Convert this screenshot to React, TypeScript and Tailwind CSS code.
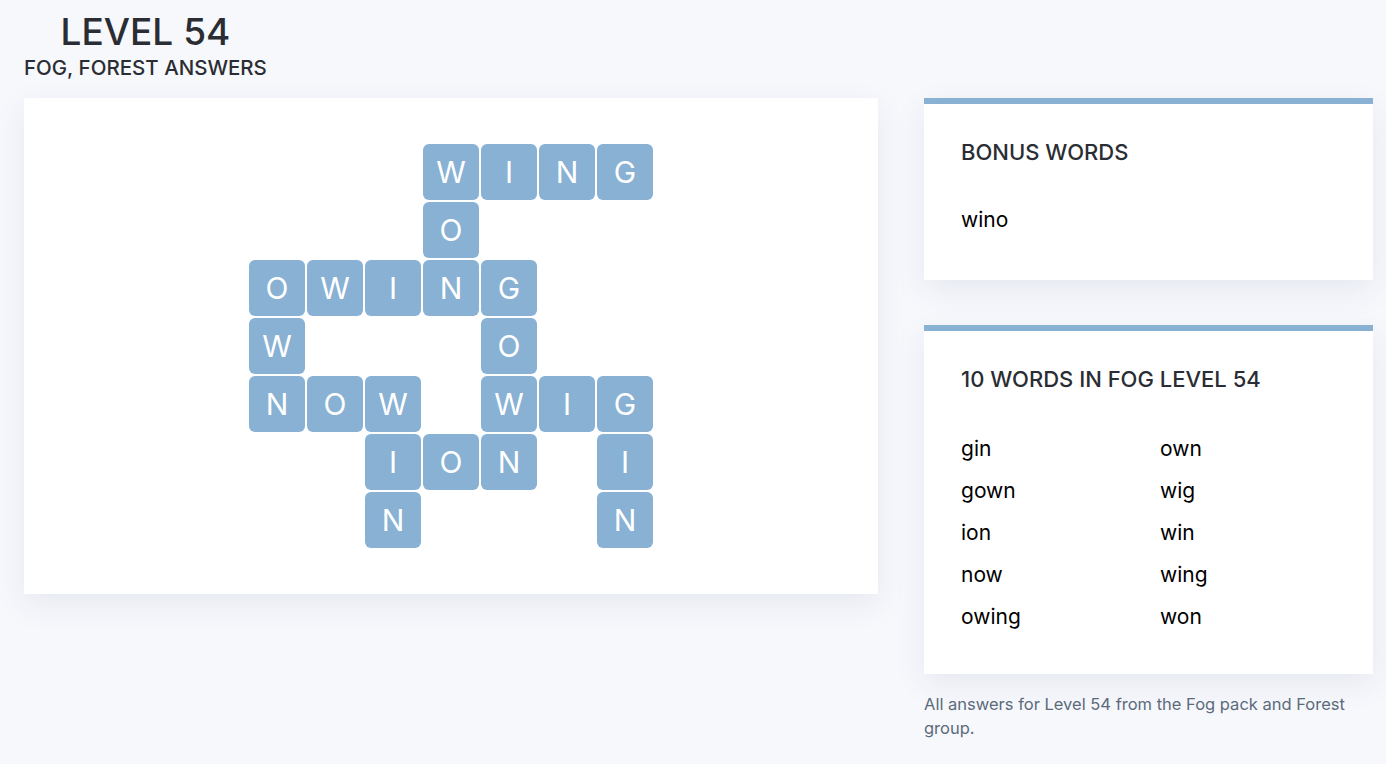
import React from 'react';

const grid: string[] = [
  '   WING',
  '   O   ',
  'OWING  ',
  'W   O  ',
  'NOW WIG',
  '  ION I',
  '  N   N',
];

const words: string[][] = [
  ['gin', 'own'],
  ['gown', 'wig'],
  ['ion', 'win'],
  ['now', 'wing'],
  ['owing', 'won'],
];

function Board() {
  return (
    <div className="grid grid-cols-[repeat(7,56px)] grid-rows-[repeat(7,56px)] gap-[2px]">
      {grid.flatMap((row, r) =>
        row.split('').map((ch, c) =>
          ch === ' ' ? (
            <div key={`${r}-${c}`} />
          ) : (
            <div
              key={`${r}-${c}`}
              className="flex items-center justify-center rounded-[6px] bg-[#88b1d4] text-[30px] text-white"
            >
              {ch}
            </div>
          )
        )
      )}
    </div>
  );
}

function Panel({ children, pb }: { children: React.ReactNode; pb: string }) {
  return (
    <div className={`border-t-[6px] border-[#88b1d4] bg-white px-[37px] pt-[34px] shadow-[0_10px_30px_rgba(30,50,100,0.08)] ${pb}`}>
      {children}
    </div>
  );
}

export default function App() {
  return (
    <div className="min-h-[764px] bg-[#f7f8fc] font-['Inter',sans-serif] text-[#2a2d33]">
      <div className="pl-[24px] pt-[8px]">
        <div className="inline-block text-center">
          <h1 className="text-[37px] leading-[48px] font-medium">LEVEL 54</h1>
          <h2 className="text-[20.5px] leading-[24px] font-medium">FOG, FOREST ANSWERS</h2>
        </div>
      </div>

      <div className="mt-[17px] flex items-start gap-[46px] pl-[24px]">
        <div className="flex h-[496px] w-[854px] items-center justify-center bg-white shadow-[0_10px_30px_rgba(30,50,100,0.08)]">
          <Board />
        </div>

        <div className="flex w-[449px] flex-col">
          <Panel pb="pb-[46px]">
            <h3 className="text-[22px] leading-[28px] font-medium">BONUS WORDS</h3>
            <p className="mt-[40px] text-[21px] leading-[28px] text-black">wino</p>
          </Panel>
          <div className="h-[45px]" />
          <Panel pb="pb-[43px]">
            <h3 className="text-[22px] leading-[28px] font-medium">10 WORDS IN FOG LEVEL 54</h3>
            <div className="mt-[42px] grid grid-cols-[199px_1fr] gap-y-[14px] text-[21px] leading-[28px] text-black">
              {words.flatMap(([a, b]) => [
                <span key={a}>{a}</span>,
                <span key={b}>{b}</span>,
              ])}
            </div>
          </Panel>
          <p className="mt-[18px] text-[16.5px] leading-[24px] text-[#5b6b7b]">
            All answers for Level 54 from the Fog pack and Forest group.
          </p>
        </div>
      </div>
    </div>
  );
}
